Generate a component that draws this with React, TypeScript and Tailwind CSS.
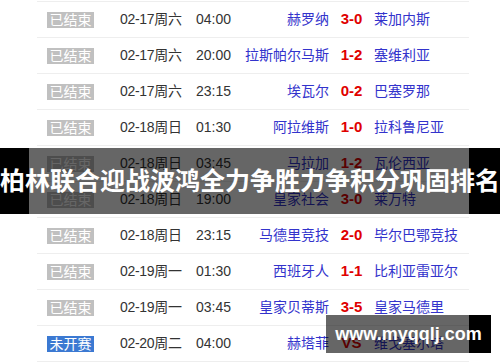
import React from "react";

type Match = {
  status: "done" | "todo";
  date: string;
  time: string;
  home: string;
  score: string;
  away: string;
};

const matches: Match[] = [
  { status: "done", date: "02-17周六", time: "04:00", home: "赫罗纳", score: "3-0", away: "莱加内斯" },
  { status: "done", date: "02-17周六", time: "20:00", home: "拉斯帕尔马斯", score: "1-2", away: "塞维利亚" },
  { status: "done", date: "02-17周六", time: "23:15", home: "埃瓦尔", score: "0-2", away: "巴塞罗那" },
  { status: "done", date: "02-18周日", time: "01:30", home: "阿拉维斯", score: "1-0", away: "拉科鲁尼亚" },
  { status: "done", date: "02-18周日", time: "03:45", home: "马拉加", score: "1-2", away: "瓦伦西亚" },
  { status: "done", date: "02-18周日", time: "19:00", home: "皇家社会", score: "3-0", away: "莱万特" },
  { status: "done", date: "02-18周日", time: "23:15", home: "马德里竞技", score: "2-0", away: "毕尔巴鄂竞技" },
  { status: "done", date: "02-19周一", time: "01:30", home: "西班牙人", score: "1-1", away: "比利亚雷亚尔" },
  { status: "done", date: "02-19周一", time: "03:45", home: "皇家贝蒂斯", score: "3-5", away: "皇家马德里" },
  { status: "todo", date: "02-20周二", time: "04:00", home: "赫塔菲", score: "VS", away: "维戈塞尔塔" },
];

const font = { fontFamily: '"Liberation Sans", "Noto Sans CJK SC", sans-serif' };

function Row({ m }: { m: Match }) {
  return (
    <div className="flex h-[36px] items-center border-b border-[#eeeeee] text-[14px]">
      <div className="pl-[10px]">
        <span
          className={
            "flex h-[16px] w-[47px] items-center justify-center text-[14px] leading-none text-white " +
            (m.status === "done" ? "bg-[#c0c0c0]" : "bg-[#3b79d2]")
          }
        >
          {m.status === "done" ? "已结束" : "未开赛"}
        </span>
      </div>
      <div className="ml-[26px] w-[76px] text-[#333333] tracking-[-0.3px]">{m.date}</div>
      <div className="w-[40px] text-[#333333]">{m.time}</div>
      <div className="w-[93px] whitespace-nowrap text-right text-[#3333cc]">{m.home}</div>
      <div className="w-[45px] text-center text-[15px] font-bold text-[#e00000]">{m.score}</div>
      <div className="whitespace-nowrap text-[#3333cc]">{m.away}</div>
    </div>
  );
}

export default function App() {
  return (
    <div className="relative h-[362px] w-[500px] overflow-hidden bg-white" style={font}>
      {/* 比赛列表 */}
      <div className="ml-[37px] mt-[1px] w-[432px] border-t border-[#eeeeee]">
        {matches.map((m, i) => (
          <Row key={i} m={m} />
        ))}
      </div>

      {/* 标题遮罩 */}
      <div className="absolute left-0 top-[148px] flex h-[66px] w-[500px]">
        <div className="w-[29px] bg-black" />
        <div className="w-[440px] bg-black/60" />
        <div className="flex-1 bg-black" />
        <div className="absolute inset-0 flex items-center justify-center whitespace-nowrap text-[25px] font-bold leading-none text-white">
          柏林联合迎战波鸿全力争胜力争积分巩固排名
        </div>
      </div>

      {/* 水印 */}
      <div className="absolute left-[326px] top-[315px] flex h-[38px] w-[165px]">
        <div className="w-[143px] bg-black/60" />
        <div className="flex-1 bg-black" />
        <div
          className="absolute inset-0 flex items-center justify-center text-[18px] font-bold leading-none text-white"
          style={{ fontFamily: '"Liberation Sans", sans-serif' }}
        >
          www.myqqlj.com
        </div>
      </div>
    </div>
  );
}
